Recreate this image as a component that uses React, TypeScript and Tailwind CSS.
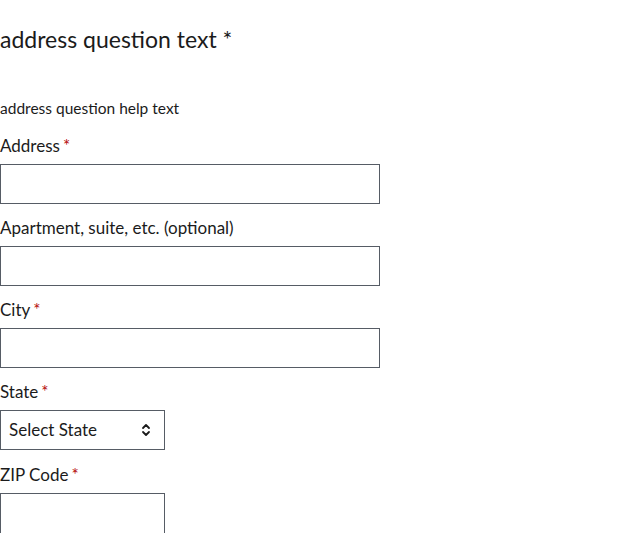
import React from "react";

const font = { fontFamily: "Lato, 'Liberation Sans', sans-serif" };

function Req() {
  return <span className="ml-[3px] text-[#b50909]">*</span>;
}

function Field({
  label,
  required,
  narrow,
  first,
  last,
}: {
  label: string;
  required?: boolean;
  narrow?: boolean;
  first?: boolean;
  last?: boolean;
}) {
  return (
    <div>
      <label
        className={`block text-[17px] leading-[19px] text-[#1b1b1b] ${
          first ? "mt-[18px]" : last ? "mt-[15px]" : "mt-[14px]"
        }`}
      >
        {label}
        {required && <Req />}
      </label>
      <input
        type="text"
        className={`mt-[9px] block border border-[#565c65] bg-white px-2 text-[17px] outline-none ${
          narrow ? "w-[165px]" : "w-[380px]"
        } ${last ? "h-[42px]" : "h-10"}`}
      />
    </div>
  );
}

function Chevrons() {
  return (
    <svg width="10" height="16" viewBox="0 0 10 16" fill="none">
      <path d="M2 6 L5 3 L8 6" stroke="#1b1b1b" strokeWidth="1.8" strokeLinecap="round" strokeLinejoin="round" />
      <path d="M2 10 L5 13 L8 10" stroke="#1b1b1b" strokeWidth="1.8" strokeLinecap="round" strokeLinejoin="round" />
    </svg>
  );
}

export default function App() {
  return (
    <div className="min-h-[533px] bg-white text-[#1b1b1b]" style={font}>
      <fieldset>
        <legend className="pt-[26px] text-[23px] leading-[26px] text-[#1b1b1b]">
          address question text *
        </legend>
        <p className="mt-[46px] text-[15.5px] leading-[20px] text-[#1b1b1b]">
          address question help text
        </p>

        <Field label="Address" required first />
        <Field label="Apartment, suite, etc. (optional)" />
        <Field label="City" required />

        <div>
          <label className="mt-[14px] block text-[17px] leading-[19px]">
            State
            <Req />
          </label>
          <div className="mt-[9px] flex h-10 w-[165px] items-center justify-between border border-[#565c65] pl-2 pr-[13px]">
            <span className="text-[17px]">Select State</span>
            <Chevrons />
          </div>
        </div>

        <Field label="ZIP Code" required narrow last />
      </fieldset>
    </div>
  );
}
